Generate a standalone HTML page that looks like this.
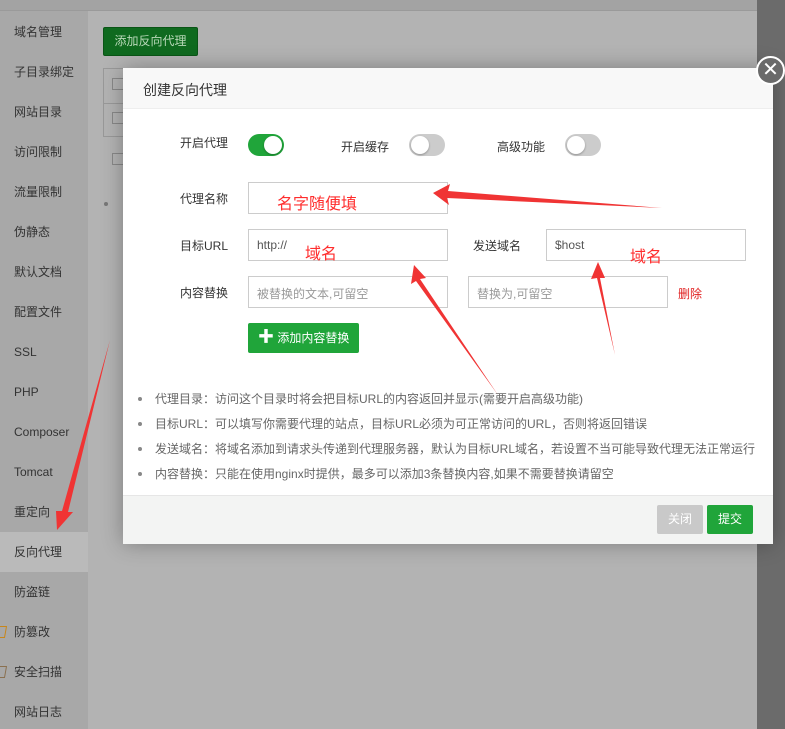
<!DOCTYPE html>
<html><head><meta charset="utf-8"><style>
*{margin:0;padding:0;box-sizing:border-box}
body{width:785px;height:729px;overflow:hidden;position:relative;background:#b3b3b3;font-family:"Liberation Sans","Noto Sans CJK SC",sans-serif;font-size:12px;color:#333}
.abs{position:absolute}
.side{left:0;top:11px;width:88px;height:718px;background:#a8a8a8}
.si{position:absolute;left:14px;font-size:12px;color:#333;line-height:16px}
.top{left:0;top:0;width:757px;height:11px;background:#a3a3a3;border-bottom:1px solid #9a9a9a}
.rs{left:757px;top:0;width:28px;height:729px;background:#6b6b6b}
.modal{left:123px;top:68px;width:650px;height:476px;background:#fff;box-shadow:0 0 20px rgba(0,0,0,.3)}
.hd{height:41px;background:#f8f8f8;border-bottom:1px solid #eee;padding:12px 0 0 20px;font-size:14px;color:#333}
.lbl{position:absolute;font-size:12px;color:#333;text-align:right;width:100px}
.inp{position:absolute;border:1px solid #ccc;height:32px;background:#fff;padding:8px 8px;font-size:12px;color:#555}
.ph{color:#999}
.tg{position:absolute;width:36px;height:22px;border-radius:11px;background:#ccc}
.tg i{position:absolute;top:2px;left:2px;width:18px;height:18px;border-radius:50%;background:#fff;box-shadow:0 1px 2px rgba(0,0,0,.3)}
.tg.on{background:#20a53a}.tg.on i{left:16px}
.tips{position:absolute;left:14px;top:324px;color:#666;font-size:12px}
.tips div{height:25px;line-height:14px;position:relative;padding-left:18px}
.tips div:before{content:"";position:absolute;left:1px;top:5px;width:4px;height:4px;border-radius:50%;background:#888}
.ft{position:absolute;left:0;top:427px;width:650px;height:49px;background:#f3f4f3;border-top:1px solid #e6e6e6}
.red{position:absolute;color:#ff2d2d;font-size:16px}
</style></head><body>
<div class="abs top"></div>
<div class="abs side"></div>
<div class="abs" style="left:0;top:532px;width:88px;height:40px;background:#bababa"></div>
<div class="si" style="top:24px">域名管理</div>
<div class="si" style="top:64px">子目录绑定</div>
<div class="si" style="top:104px">网站目录</div>
<div class="si" style="top:144px">访问限制</div>
<div class="si" style="top:184px">流量限制</div>
<div class="si" style="top:224px">伪静态</div>
<div class="si" style="top:264px">默认文档</div>
<div class="si" style="top:304px">配置文件</div>
<div class="si" style="top:344px">SSL</div>
<div class="si" style="top:384px">PHP</div>
<div class="si" style="top:424px">Composer</div>
<div class="si" style="top:464px">Tomcat</div>
<div class="si" style="top:504px">重定向</div>
<div class="si" style="top:544px">反向代理</div>
<div class="si" style="top:584px">防盗链</div>
<div class="si" style="top:624px">防篡改</div>
<div class="si" style="top:664px">安全扫描</div>
<div class="si" style="top:704px">网站日志</div>
<div class="abs" style="left:-4px;top:626px;width:10px;height:12px;border:1px solid #c8861a;transform:skewX(-10deg)"></div>
<div class="abs" style="left:-4px;top:666px;width:10px;height:12px;border:1px solid #8a7050;transform:skewX(-10deg)"></div>
<div class="abs" style="left:103px;top:27px;width:95px;height:29px;background:#0f6a1f;border:1px solid #0a5516;border-radius:2px;color:#b8d8b8;font-size:12px;line-height:27px;text-align:center">添加反向代理</div>
<div class="abs" style="left:103px;top:68px;width:30px;height:69px;border:1px solid #999"></div>
<div class="abs" style="left:103px;top:103px;width:30px;height:1px;background:#999"></div>
<div class="abs" style="left:112px;top:78px;width:12px;height:12px;border:1px solid #888"></div>
<div class="abs" style="left:112px;top:112px;width:12px;height:12px;border:1px solid #888"></div>
<div class="abs" style="left:112px;top:153px;width:12px;height:12px;border:1px solid #888"></div>
<div class="abs" style="left:104px;top:202px;width:4px;height:4px;border-radius:50%;background:#777"></div>
<div class="abs rs"></div>
<div class="abs modal">
<div class="hd">创建反向代理</div>
<div class="lbl" style="left:5px;top:66px">开启代理</div>
<div class="tg on" style="left:125px;top:66px"><i></i></div>
<div class="lbl" style="left:166px;top:70px">开启缓存</div>
<div class="tg" style="left:286px;top:66px"><i></i></div>
<div class="lbl" style="left:322px;top:70px">高级功能</div>
<div class="tg" style="left:442px;top:66px"><i></i></div>
<div class="lbl" style="left:5px;top:122px">代理名称</div>
<div class="inp" style="left:125px;top:114px;width:200px"></div>
<div class="lbl" style="left:5px;top:169px">目标URL</div>
<div class="inp" style="left:125px;top:161px;width:200px">http://</div>
<div class="lbl" style="left:298px;top:169px">发送域名</div>
<div class="inp" style="left:423px;top:161px;width:200px">$host</div>
<div class="lbl" style="left:5px;top:216px">内容替换</div>
<div class="inp ph" style="left:125px;top:208px;width:200px">被替换的文本,可留空</div>
<div class="inp ph" style="left:345px;top:208px;width:200px">替换为,可留空</div>
<div class="abs" style="left:555px;top:217px;color:#e02020">删除</div>
<div class="abs" style="left:125px;top:255px;width:111px;height:30px;background:#20a53a;border-radius:2px;color:#fff;line-height:30px;padding-left:10px"><b style="font-size:16px">✚</b> 添加内容替换</div>
<div class="tips">
<div>代理目录：访问这个目录时将会把目标URL的内容返回并显示(需要开启高级功能)</div>
<div>目标URL：可以填写你需要代理的站点，目标URL必须为可正常访问的URL，否则将返回错误</div>
<div>发送域名：将域名添加到请求头传递到代理服务器，默认为目标URL域名，若设置不当可能导致代理无法正常运行</div>
<div>内容替换：只能在使用nginx时提供，最多可以添加3条替换内容,如果不需要替换请留空</div>
</div>
<div class="ft">
<div class="abs" style="left:534px;top:9px;width:46px;height:29px;background:#c9c9c9;border-radius:2px;color:#fff;text-align:center;line-height:29px">关闭</div>
<div class="abs" style="left:584px;top:9px;width:46px;height:29px;background:#20a53a;border-radius:2px;color:#fff;text-align:center;line-height:29px">提交</div>
</div>
</div>
<div class="abs" style="left:756px;top:56px;width:29px;height:29px;border-radius:50%;background:#6a6a6a;border:2px solid #fff;color:#fff;font-size:20px;line-height:24px;text-align:center">✕</div>
<div class="red" style="left:277px;top:190px">名字随便填</div>
<div class="red" style="left:305px;top:240px">域名</div>
<div class="red" style="left:630px;top:243px">域名</div>
<svg class="abs" style="left:0;top:0" width="785" height="729">
<g fill="#f03434">
<polygon points="433,193 450,184 448,191 662,208 447,198 449,205"/>
<polygon points="414,265 426,278 420,279 498,395 416,281 411,284"/>
<polygon points="598,262 605,278 600,278 615,355 597,278 591,279"/>
<polygon points="110,340 68,512 73,512 57,530 56,511 62,511"/>
</g>
</svg>
</body></html>
